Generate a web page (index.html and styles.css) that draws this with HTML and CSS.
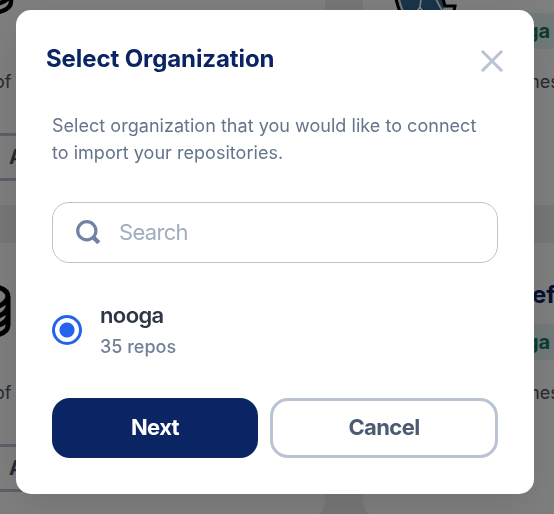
FILE: index.html
```html
<!DOCTYPE html>
<html lang="en">
<head>
<meta charset="utf-8">
<title>Select Organization</title>
<link rel="stylesheet" href="styles.css">
</head>
<body>
<main class="board">
  <article class="card card-left">
    <div class="logo"><svg width="54" height="64" viewBox="0 0 54 64" fill="none" stroke="#000" stroke-width="4.5"><path d="M0 60Q51 61 51 47V22M28 51Q49 48 51 38M28 41Q49 38 51 28"/></svg></div>
    <p class="desc">of A</p>
    <div class="action">A</div>
  </article>
  <article class="card card-right">
    <div class="logo elephant"><svg width="70" height="64" viewBox="0 0 70 64"><path d="M2 45L7 60L14 71L25 65L31 73L46 68L51 55V45Z" fill="#336791"/><path d="M2 50Q6 67 13 73M49 50L51 57L61 57L60 62L52 64" fill="none" stroke="#000" stroke-width="3"/><path d="M5 50Q9 66 15 71M27 50L26 58L21 65M26 58L33 69M42 50L45 56L49 63L57 60" fill="none" stroke="#fff" stroke-width="1.7"/></svg></div>
    <div class="meta"><span class="tag">nooga</span></div>
    <p class="desc">mes</p>
  </article>
  <article class="card card-left">
    <div class="logo stack"><svg width="54" height="56" viewBox="0 0 54 56" fill="none" stroke="#000" stroke-width="5"><path d="M0 3H31Q50 4 50 14V42Q50 52 30 53H0M50 14Q47 24 30 25H0M50 24Q47 34 30 35H0M50 34Q47 43 30 44H0"/></svg></div>
    <p class="desc">of A</p>
    <div class="action">A</div>
  </article>
  <article class="card card-right">
    <h2 class="name">ef</h2>
    <div class="meta"><span class="tag">nooga</span></div>
    <p class="desc">mes</p>
  </article>
</main>
<div class="overlay">
  <section class="modal" role="dialog" aria-modal="true">
    <header class="head">
      <h1>Select Organization</h1>
      <button class="close" aria-label="Close"><svg width="22" height="22" viewBox="0 0 22 22" fill="none" stroke="#b9c3d2" stroke-width="3" stroke-linecap="round"><path d="M1.8 1.8L20.2 20.2M20.2 1.8L1.8 20.2"/></svg></button>
    </header>
    <p class="intro">Select organization that you would like to connect<br>to import your repositories.</p>
    <div class="search">
      <svg width="25" height="25" viewBox="0 0 25 25" fill="none" stroke="#7182a3"><circle cx="10.8" cy="10.8" r="9.1" stroke-width="3.2"/><path d="M17 17L22.8 22.8" stroke-width="4.4"/></svg>
      <span>Search</span>
    </div>
    <div class="org">
      <span class="radio"></span>
      <div>
        <div class="org-name">nooga</div>
        <div class="org-count">35 repos</div>
      </div>
    </div>
    <footer class="buttons">
      <button class="next">Next</button>
      <button class="cancel">Cancel</button>
    </footer>
  </section>
</div>
</body>
</html>
```
FILE: styles.css
```css
* { box-sizing: border-box; }
body {
  margin: 0;
  height: 514px;
  overflow: hidden;
  background: #efefef;
  font-family: Inter, "Liberation Sans", sans-serif;
}
h1, h2, p { margin: 0; }
button { font-family: inherit; border: 0; padding: 0; background: none; }

.board {
  display: grid;
  grid-template-columns: 325px 191px;
  grid-auto-rows: 273px;
  gap: 38px;
  margin-top: -68px;
}
.card {
  background: #fff;
  display: grid;
  grid-template-rows: 138px 63px 48px;
  overflow: hidden;
  color: #4a5568;
}
.card-left { border-radius: 0 14px 14px 0; }
.card-right {
  border-radius: 14px 0 0 14px;
  grid-template-rows: 81px 57px 63px;
}
.logo { padding-top: 23px; margin-left: -40px; }
.stack { padding-top: 40px; margin-left: -42px; }
.elephant { margin-left: 31px; padding-top: 17px; height: 81px; }
.logo svg { display: block; }
.desc { font-size: 18px; line-height: 24px; white-space: nowrap; }
.card-left .desc { margin-left: -6px; }
.card-right .desc { margin-left: 161px; }
.action {
  border: solid #b9c3d2;
  border-width: 3px 0;
  padding-left: 9px;
  font-size: 20px;
  font-weight: 700;
  line-height: 42px;
}
.name { font-size: 24px; line-height: 30px; padding: 37px 0 0 169px; color: #0b2463; }
.meta { grid-row: 2; padding-left: 112px; }
.tag {
  display: block;
  width: 90px;
  height: 36px;
  padding-left: 14px;
  border-radius: 18px;
  background: #e6f7f5;
  color: #157a66;
  font-size: 20px;
  font-weight: 700;
  line-height: 36px;
}

.overlay {
  position: fixed;
  inset: 0;
  padding: 10px 20px 20px 16px;
  background: rgba(0, 0, 0, .5);
}
.modal {
  height: 484px;
  padding: 30px 36px 36px;
  border-radius: 15px;
  background: #fff;
  box-shadow: 0 10px 44px rgba(0, 0, 0, .12);
}
.head {
  display: flex;
  justify-content: space-between;
  height: 72px;
  margin: 0 -5px 0 -6px;
}
.head h1 { font-size: 24px; line-height: 38px; font-weight: 700; letter-spacing: -.1px; color: #0b2463; }
.close { width: 22px; height: 22px; margin-top: 10px; }
.close svg { display: block; }
.intro { font-size: 18px; line-height: 27px; letter-spacing: .03px; color: #64748b; white-space: nowrap; }
.search {
  display: flex;
  align-items: center;
  gap: 18px;
  height: 61px;
  margin-top: 36px;
  padding-left: 23px;
  border: 1px solid #b9c3d2;
  border-radius: 17px;
  color: #a0aec0;
  font-size: 22px;
  letter-spacing: -.7px;
}
.search span { margin-top: -2px; }
.org { display: flex; gap: 18px; height: 135px; padding-top: 37px; }
.radio {
  width: 30px;
  height: 30px;
  margin-top: 15px;
  border: 3px solid #2463eb;
  border-radius: 50%;
  background: radial-gradient(circle, #2463eb 7px, #fff 8px);
}
.org-name { color: #2d3748; font-size: 22px; line-height: 31px; font-weight: 600; letter-spacing: -.6px; }
.org-count { color: #718096; font-size: 18px; line-height: 32px; font-weight: 500; }
.buttons { display: grid; grid-template-columns: 206px 228px; gap: 12px; }
.next, .cancel { height: 60px; border-radius: 18px; font-size: 22px; font-weight: 700; letter-spacing: -.6px; padding-bottom: 2px; }
.next { background: #0b2463; color: #fff; }
.cancel { border: 3px solid #b9c3d2; color: #4a5b73; }
```
